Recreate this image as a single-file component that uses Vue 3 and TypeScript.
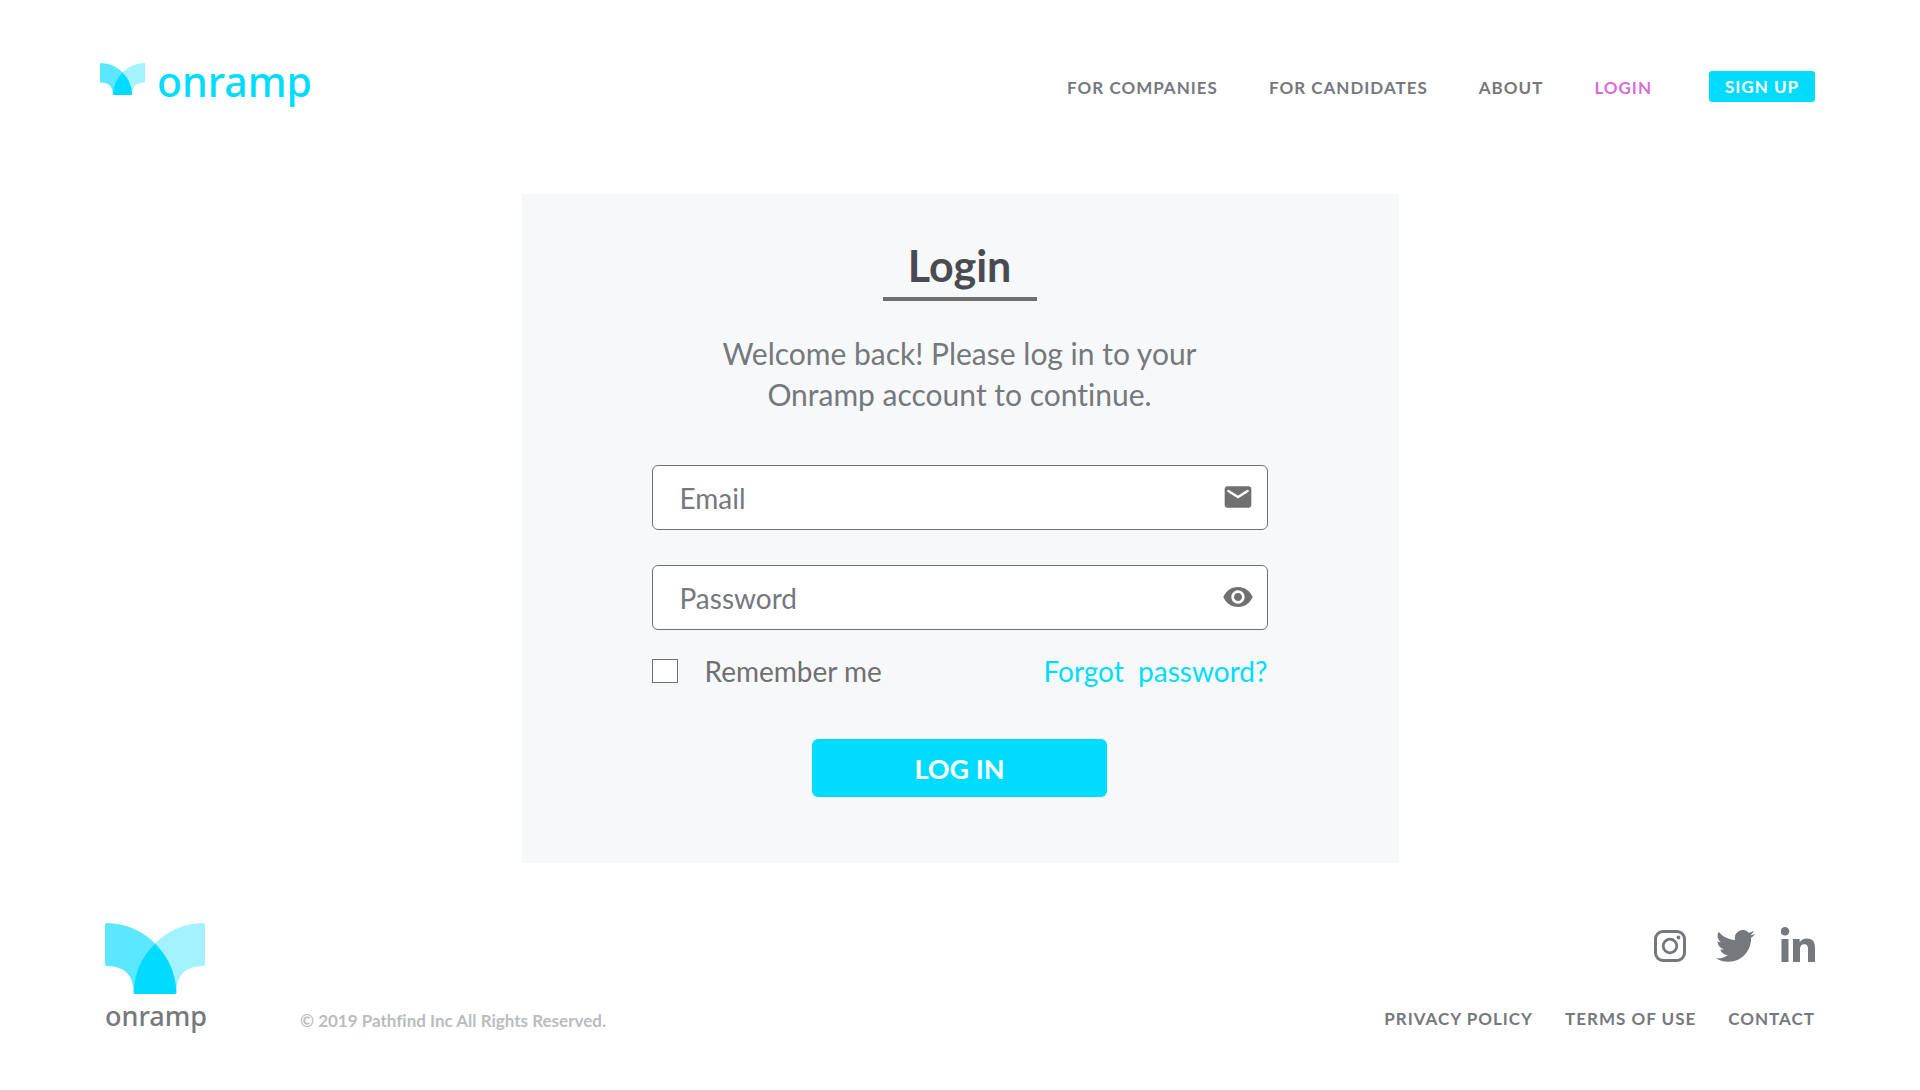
<script setup lang="ts">
interface NavLink {
  label: string
  href: string
  active?: boolean
}

const navLinks: NavLink[] = [
  { label: 'FOR COMPANIES', href: '#companies' },
  { label: 'FOR CANDIDATES', href: '#candidates' },
  { label: 'ABOUT', href: '#about' },
  { label: 'LOGIN', href: '#login', active: true },
]

const legalLinks: NavLink[] = [
  { label: 'PRIVACY POLICY', href: '#privacy' },
  { label: 'TERMS OF USE', href: '#terms' },
  { label: 'CONTACT', href: '#contact' },
]
</script>

<template>
  <div class="page">
    <header class="header">
      <a class="brand" href="#home">
        <svg class="brand-mark" viewBox="0 0 100 71" preserveAspectRatio="none" aria-hidden="true">
          <path d="M0 2Q0 0 2 0A70 70 0 0 1 50 20.500A73 73 0 0 0 29 70Q28 43 2 43Q0 43 0 41Z" fill="#5ae7ff" />
          <path d="M100 2Q100 0 98 0A70 70 0 0 0 50 20.500A73 73 0 0 1 71 70Q72 43 98 43Q100 43 100 41Z" fill="#a5f2ff" />
          <path d="M50 20.500A73 73 0 0 1 71.500 69Q71.500 71 70 71H30Q28.500 71 28.500 69A73 73 0 0 1 50 20.500Z" fill="#00dcff" />
        </svg>
        <span class="brand-name">onramp</span>
      </a>
      <nav class="nav">
        <a
          v-for="link in navLinks"
          :key="link.label"
          class="nav-link"
          :class="{ active: link.active }"
          :href="link.href"
        >{{ link.label }}</a>
        <button class="signup" type="button">SIGN UP</button>
      </nav>
    </header>

    <main class="card">
      <h1 class="title">Login</h1>
      <p class="intro">Welcome back! Please log in to your<br />Onramp account to continue.</p>
      <form class="form" @submit.prevent>
        <div class="field">
          <input class="input" type="email" placeholder="Email" aria-label="Email" />
          <svg class="field-icon" viewBox="0 0 24 24" aria-hidden="true">
            <path d="M20 4H4c-1.100 0-1.990.9-1.990 2L2 18c0 1.100.9 2 2 2h16c1.100 0 2-.9 2-2V6c0-1.100-.9-2-2-2z" />
            <path class="flap" d="M4.800 7.500L12 12L19.200 7.500" />
          </svg>
        </div>
        <div class="field">
          <input class="input" type="password" placeholder="Password" aria-label="Password" />
          <svg class="field-icon" viewBox="0 0 24 24" aria-hidden="true">
            <path d="M12 4.500C7 4.500 2.730 7.610 1 12c1.730 4.390 6 7.500 11 7.500s9.270-3.110 11-7.500c-1.730-4.390-6-7.500-11-7.500zM12 17c-2.760 0-5-2.240-5-5s2.240-5 5-5 5 2.240 5 5-2.240 5-5 5zm0-8c-1.660 0-3 1.340-3 3s1.340 3 3 3 3-1.340 3-3-1.340-3-3-3z" />
          </svg>
        </div>
        <div class="options">
          <label class="remember"><input class="checkbox" type="checkbox" />Remember me</label>
          <a class="forgot" href="#forgot">Forgot&nbsp; password?</a>
        </div>
        <button class="submit" type="submit">LOG IN</button>
      </form>
    </main>

    <footer class="footer">
      <a class="footer-brand" href="#home">
        <svg class="footer-mark" viewBox="0 0 100 71" aria-hidden="true">
          <path d="M0 2Q0 0 2 0A70 70 0 0 1 50 20.500A73 73 0 0 0 29 70Q28 43 2 43Q0 43 0 41Z" fill="#5ae7ff" />
          <path d="M100 2Q100 0 98 0A70 70 0 0 0 50 20.500A73 73 0 0 1 71 70Q72 43 98 43Q100 43 100 41Z" fill="#a5f2ff" />
          <path d="M50 20.500A73 73 0 0 1 71.500 69Q71.500 71 70 71H30Q28.500 71 28.500 69A73 73 0 0 1 50 20.500Z" fill="#00dcff" />
        </svg>
        <span class="footer-name">onramp</span>
      </a>
      <p class="copyright">© 2019 Pathfind Inc All Rights Reserved.</p>
      <div class="footer-end">
        <div class="social">
          <a class="instagram" href="#instagram" aria-label="Instagram">
            <svg width="32" height="32" viewBox="0 0 32 32">
              <rect x="1.500" y="1.500" width="29" height="29" rx="7.500" fill="none" stroke="#75787d" stroke-width="3" />
              <circle cx="16" cy="16" r="6.800" fill="none" stroke="#75787d" stroke-width="2.800" />
              <circle cx="24.500" cy="7.500" r="1.900" fill="#75787d" />
            </svg>
          </a>
          <a href="#twitter" aria-label="Twitter">
            <svg width="39" height="32" viewBox="0 2.200 24 19.600">
              <path fill="#75787d" d="M23.953 4.570a10 10 0 01-2.825.775 4.958 4.958 0 002.163-2.723c-.951.555-2.005.959-3.127 1.184a4.920 4.920 0 00-8.384 4.482C7.690 8.095 4.067 6.130 1.640 3.162a4.822 4.822 0 00-.666 2.475c0 1.710.870 3.213 2.188 4.096a4.904 4.904 0 01-2.228-.616v.060a4.923 4.923 0 003.946 4.827 4.996 4.996 0 01-2.212.085 4.936 4.936 0 004.604 3.417 9.867 9.867 0 01-6.102 2.105c-.390 0-.779-.023-1.170-.067a13.995 13.995 0 007.557 2.209c9.053 0 13.998-7.496 13.998-13.985 0-.210 0-.420-.015-.630A9.935 9.935 0 0024 4.590z" />
            </svg>
          </a>
          <a href="#linkedin" aria-label="LinkedIn">
            <svg width="34" height="35" viewBox="0 0 34 35" fill="#75787d">
              <circle cx="4" cy="4.300" r="4.300" />
              <path d="M.5 12H7.500V35H.5ZM12 12H18.700V15.200C20 12.900 22.600 11.400 26 11.400C32.500 11.400 34 15.600 34 21.500V35H27V23C27 20 26.800 17.300 23.300 17.300C19.800 17.300 19 20 19 23V35H12Z" />
            </svg>
          </a>
        </div>
        <nav class="legal">
          <a v-for="link in legalLinks" :key="link.label" class="legal-link" :href="link.href">{{ link.label }}</a>
        </nav>
      </div>
    </footer>
  </div>
</template>

<style>
body {
  margin: 0;
  background: #ffffff;
}
</style>

<style scoped>
.page {
  box-sizing: border-box;
  padding: 56px 105px 40px;
  font-family: Lato, sans-serif;
  font-variant-ligatures: none;
  color: #75787d;
}
a {
  color: inherit;
  text-decoration: none;
}
button {
  border: 0;
  font-family: inherit;
  font-weight: 700;
  color: #ffffff;
  background: #00dcff;
  cursor: pointer;
}
.header {
  display: flex;
  justify-content: space-between;
  height: 60px;
  margin-left: -5px;
}
.brand {
  display: flex;
  align-items: flex-start;
  gap: 12px;
}
.brand-mark {
  width: 45px;
  height: 32px;
  margin-top: 7px;
}
.brand-name {
  font-family: "Noto Sans", sans-serif;
  font-size: 41px;
  font-weight: 500;
  line-height: 50px;
  color: #00dcff;
}
.nav {
  display: flex;
  align-items: center;
}
.nav-link,
.legal-link {
  font-size: 17px;
  font-weight: 700;
  line-height: 24px;
  letter-spacing: 1px;
}
.nav-link {
  padding-top: 3px;
  margin-right: 51px;
}
.nav-link.active {
  margin-right: 57px;
  color: #da6bd9;
}
.signup {
  width: 106px;
  height: 31px;
  padding: 0;
  border-radius: 3px;
  font-size: 17px;
  letter-spacing: 1px;
}
.card {
  box-sizing: border-box;
  width: 877px;
  max-width: 100%;
  margin: 78px auto 0;
  padding: 48px 131px 66px 130px;
  background: #f7f8fa;
}
.title {
  width: 154px;
  margin: 0 auto;
  padding-bottom: 7px;
  border-bottom: 4px solid #707070;
  font-size: 43px;
  line-height: 48px;
  text-align: center;
  color: #4a4b50;
}
.intro {
  margin: 32px 0 50px;
  font-size: 30px;
  line-height: 41px;
  text-align: center;
}
.form {
  display: flex;
  flex-direction: column;
}
.field {
  position: relative;
  margin-bottom: 35px;
}
.input {
  display: block;
  box-sizing: border-box;
  width: 100%;
  height: 65px;
  padding: 0 60px 0 27px;
  border: 1px solid #707070;
  border-radius: 6px;
  background: #ffffff;
  font-family: inherit;
  font-size: 28px;
  color: #707070;
}
.input::placeholder {
  color: #75787d;
  opacity: 1;
}
.field-icon {
  position: absolute;
  top: 16px;
  right: 14px;
  width: 32px;
  height: 32px;
  fill: #707070;
}
.flap {
  fill: none;
  stroke: #ffffff;
  stroke-width: 1.8;
  stroke-linecap: round;
}
.options {
  display: flex;
  justify-content: space-between;
  margin-top: -11px;
  font-size: 28px;
  line-height: 34px;
  color: #707070;
}
.remember {
  display: flex;
  align-items: center;
  gap: 27px;
}
.checkbox {
  appearance: none;
  width: 26px;
  height: 24px;
  margin: 0;
  border: 1px solid #707070;
  background: #ffffff;
}
.forgot {
  color: #00dcff;
}
.submit {
  align-self: center;
  width: 295px;
  height: 58px;
  margin-top: 51px;
  border-radius: 6px;
  font-size: 27px;
}
.footer {
  display: flex;
  margin-top: 60px;
}
.footer-brand {
  display: flex;
  flex-direction: column;
  width: 100px;
}
.footer-mark {
  width: 100px;
  height: 71px;
}
.footer-name {
  font-family: "Noto Sans", sans-serif;
  font-size: 27px;
  font-weight: 500;
  line-height: 44px;
}
.copyright {
  align-self: flex-end;
  margin: 0 0 5px 95px;
  font-size: 17px;
  font-weight: 700;
  line-height: 24px;
  color: #babcbe;
}
.footer-end {
  display: flex;
  flex-direction: column;
  align-items: flex-end;
  margin-left: auto;
  padding-top: 4px;
}
.social {
  display: flex;
  align-items: flex-end;
  gap: 26px;
}
.social svg {
  display: block;
}
.instagram {
  margin-right: 4px;
}
.legal {
  display: flex;
  gap: 32px;
  margin-top: 45px;
}
</style>
